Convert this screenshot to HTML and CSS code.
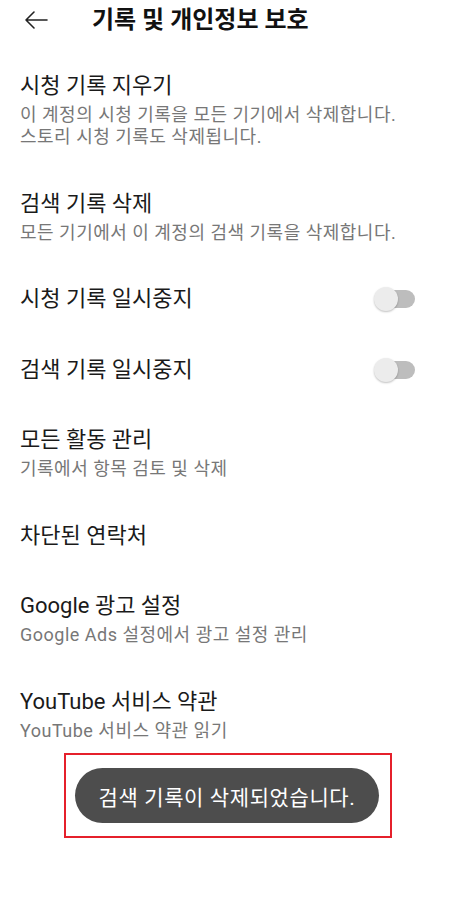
FILE: index.html
```html
<!DOCTYPE html>
<html lang="ko">
<head>
  <meta charset="UTF-8">
  <meta name="viewport" content="width=device-width, initial-scale=1.0">
  <title>기록 및 개인정보 보호</title>
  <link rel="stylesheet" href="styles.css">
</head>
<body>
  <div class="screen">
    <header class="topbar">
      <button class="back" aria-label="뒤로">
        <svg width="24" height="20" viewBox="0 0 24 20">
          <path d="M23 10H2M10 2L2 10l8 8" fill="none" stroke="#222" stroke-width="1.6" stroke-linecap="round" stroke-linejoin="round"/>
        </svg>
      </button>
      <h1>기록 및 개인정보 보호</h1>
    </header>

    <ul class="settings">
      <li class="item">
        <div class="title">시청 기록 지우기</div>
        <div class="sub">이 계정의 시청 기록을 모든 기기에서 삭제합니다.<br>스토리 시청 기록도 삭제됩니다.</div>
      </li>
      <li class="item">
        <div class="title">검색 기록 삭제</div>
        <div class="sub">모든 기기에서 이 계정의 검색 기록을 삭제합니다.</div>
      </li>
      <li class="item row">
        <div class="title">시청 기록 일시중지</div>
        <span class="switch"><span class="knob"></span></span>
      </li>
      <li class="item row">
        <div class="title">검색 기록 일시중지</div>
        <span class="switch"><span class="knob"></span></span>
      </li>
      <li class="item">
        <div class="title">모든 활동 관리</div>
        <div class="sub">기록에서 항목 검토 및 삭제</div>
      </li>
      <li class="item">
        <div class="title">차단된 연락처</div>
      </li>
      <li class="item">
        <div class="title">Google 광고 설정</div>
        <div class="sub">Google Ads 설정에서 광고 설정 관리</div>
      </li>
      <li class="item">
        <div class="title">YouTube 서비스 약관</div>
        <div class="sub">YouTube 서비스 약관 읽기</div>
      </li>
    </ul>

    <div class="highlight">
      <div class="toast">검색 기록이 삭제되었습니다.</div>
    </div>
  </div>
</body>
</html>
```

FILE: styles.css
```css
body {
  margin: 0;
  background-color: #fff;
  font-family: Roboto, "Noto Sans CJK KR", sans-serif;
  color: #1a1a1a;
}
.screen {
  position: relative;
  width: 454px;
  height: 912px;
  overflow: hidden;
}
.topbar {
  display: flex;
  align-items: center;
  height: 40px;
}
.back {
  display: flex;
  align-items: center;
  justify-content: center;
  width: 24px;
  height: 40px;
  margin-left: 24px;
  padding: 0;
  border: none;
  background: none;
}
.topbar h1 {
  margin: 0 0 0 44px;
  font-size: 24px;
  font-weight: 700;
  color: #111;
  line-height: 40px;
}
.settings {
  list-style: none;
  margin: 0;
  padding: 11px 0 0;
}
.item {
  padding: 20px 20px 20.5px;
}
.row {
  display: flex;
  align-items: center;
  justify-content: space-between;
  padding-right: 39px;
}
.title {
  font-size: 22px;
  line-height: 30px;
}
.sub {
  margin-top: 3px;
  font-size: 18px;
  line-height: 22px;
  letter-spacing: 0.5px;
  color: #777;
}
.switch {
  position: relative;
  display: block;
  width: 41px;
  height: 24px;
}
.switch::before {
  content: "";
  position: absolute;
  left: 4px;
  right: 0;
  top: 3px;
  height: 18px;
  border-radius: 9px;
  background-color: #bdbdbd;
}
.knob {
  position: absolute;
  left: 0;
  top: 0;
  width: 24px;
  height: 24px;
  border-radius: 50%;
  background-color: #ececec;
  box-shadow: 0 1px 2px rgba(0, 0, 0, 0.25);
}
.highlight {
  position: absolute;
  left: 64px;
  top: 753px;
  width: 324px;
  height: 81px;
  border: 2px solid #e5202b;
  display: flex;
  align-items: center;
  justify-content: center;
}
.toast {
  width: 304px;
  height: 55px;
  border-radius: 28px;
  background-color: #4d4d4d;
  color: #fff;
  font-size: 21px;
  letter-spacing: 0.6px;
  display: flex;
  align-items: center;
  justify-content: center;
  margin-left: -2px;
}
```
